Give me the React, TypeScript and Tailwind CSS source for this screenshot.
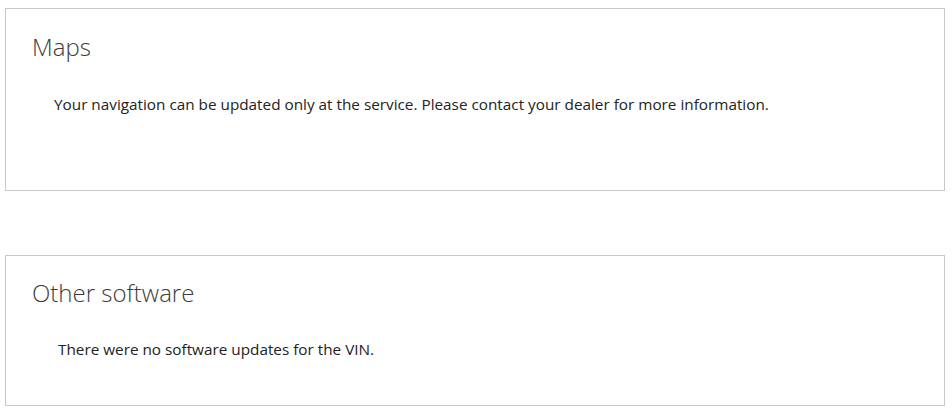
export default function App() {
  return (
    <div className="min-h-screen bg-white pl-[5px] pr-[7px] pt-2 font-['Open_Sans',sans-serif]">
      {/* Maps */}
      <section className="h-[183px] border border-[#c8c8c8] px-[26px] pt-[22px]">
        <h2 className="text-[24px] font-light leading-8 text-[#3c3c3c]">Maps</h2>
        <p className="mt-[30px] pl-[22px] text-[15.3px] leading-[22px] text-[#222]">
          Your navigation can be updated only at the service. Please contact your dealer for more information.
        </p>
      </section>

      {/* Other software */}
      <section className="mt-[64px] h-[151px] border border-[#c8c8c8] px-[26px] pt-[21px]">
        <h2 className="text-[24px] font-light leading-8 text-[#3c3c3c]">Other software</h2>
        <p className="mt-[29px] pl-[26px] text-[15.3px] leading-[22px] text-[#222]">
          There were no software updates for the VIN.
        </p>
      </section>
    </div>
  )
}
